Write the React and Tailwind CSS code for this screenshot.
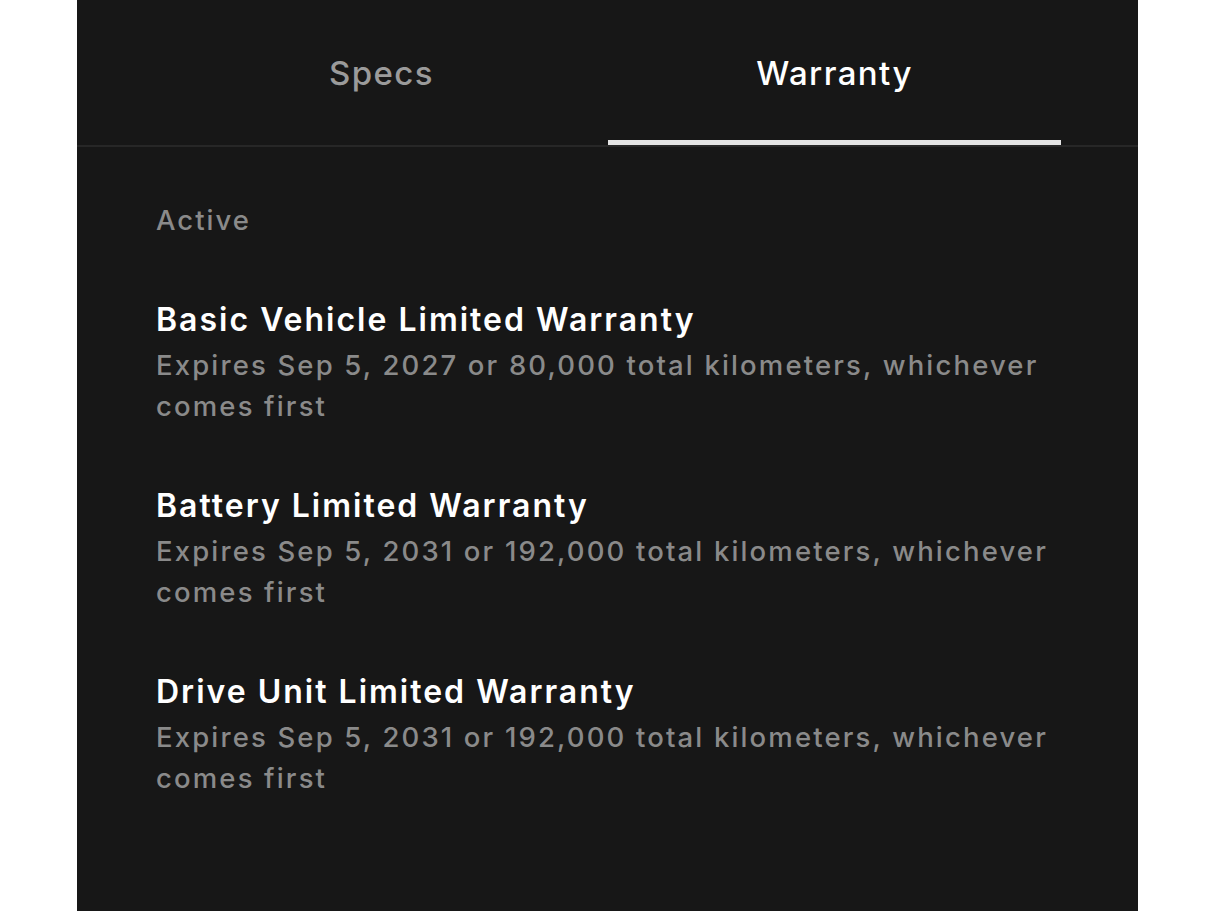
import React, { useState } from 'react';

const warranties = [
  { title: 'Basic Vehicle Limited Warranty', detail: 'Expires Sep 5, 2027 or 80,000 total kilometers, whichever comes first' },
  { title: 'Battery Limited Warranty', detail: 'Expires Sep 5, 2031 or 192,000 total kilometers, whichever comes first' },
  { title: 'Drive Unit Limited Warranty', detail: 'Expires Sep 5, 2031 or 192,000 total kilometers, whichever comes first' },
];

const App = () => {
  const [tab, setTab] = useState('Warranty');

  return (
    <div className="min-h-screen bg-white" style={{ fontFamily: 'Inter, "Noto Sans", sans-serif' }}>
      <div className="mx-auto w-[1061px] min-h-screen bg-[#171717]">
        <div className="flex pl-[78px] pr-[77px] border-b-2 border-[#272727]">
          {['Specs', 'Warranty'].map((t) => (
            <button
              key={t}
              onClick={() => setTab(t)}
              className="flex-1 h-[145px] flex flex-col"
            >
              <span
                className={`flex-1 flex items-center justify-center pt-2 text-[33px] font-medium tracking-[1.4px] ${
                  tab === t ? 'text-white' : 'text-[#9b9b9b]'
                }`}
              >
                {t}
              </span>
              <span className={`h-[5px] w-full ${tab === t ? 'bg-[#e4e4e4]' : ''}`} />
            </button>
          ))}
        </div>

        <div className="pl-[79px] pt-[57px]">
          <p className="text-[27.5px] leading-[32px] font-medium tracking-[2px] text-[#8a8a8a]">Active</p>
          <div className="mt-[65px] flex flex-col gap-[60px]">
            {warranties.map((w) => (
              <div key={w.title}>
                <h3 className="text-[32px] leading-[38px] font-semibold tracking-[2px] text-white">{w.title}</h3>
                <p className="mt-[6px] text-[27.5px] leading-[41px] font-medium tracking-[2.15px] text-[#8a8a8a] max-w-[930px]">
                  {w.detail}
                </p>
              </div>
            ))}
          </div>
        </div>
      </div>
    </div>
  );
};

export default App;
